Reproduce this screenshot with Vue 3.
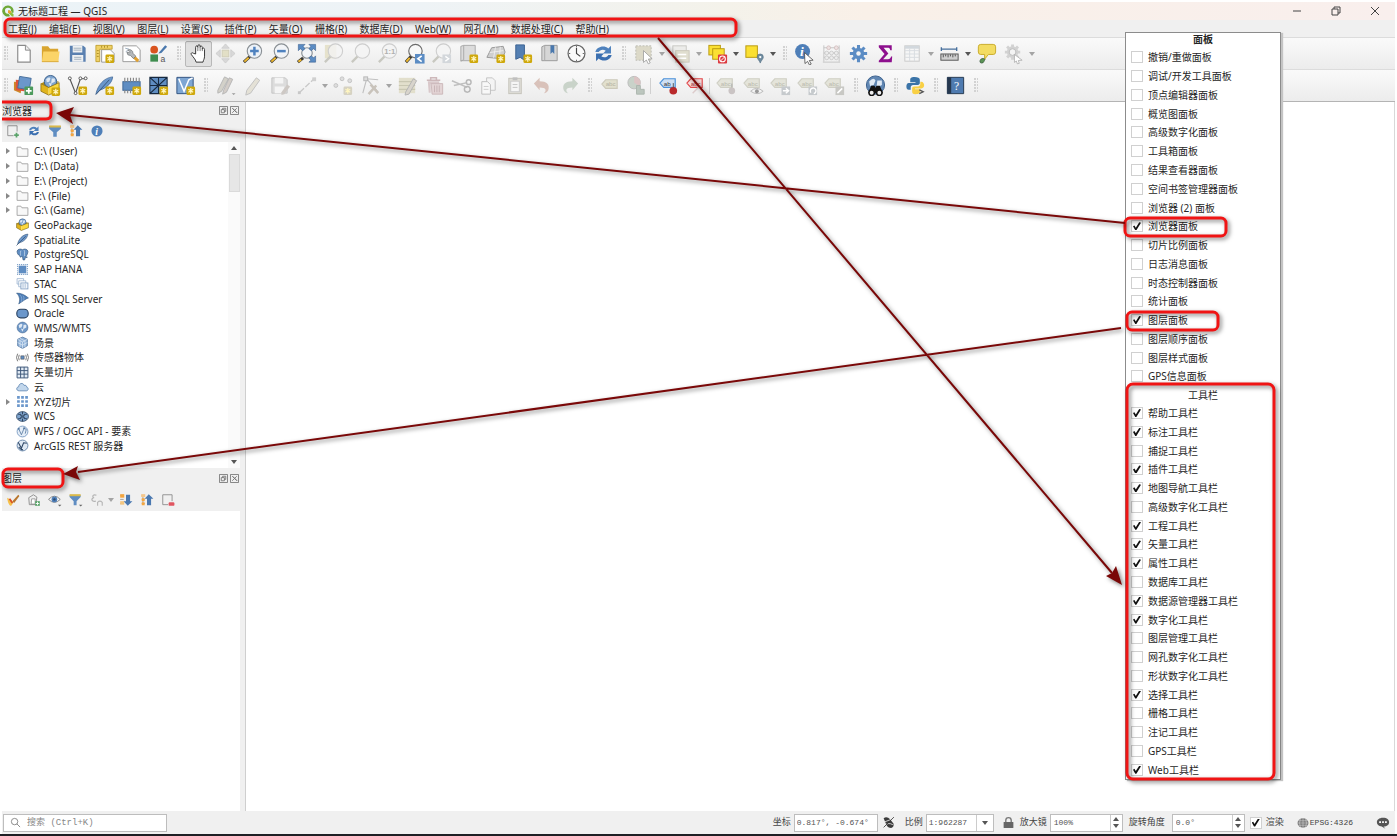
<script setup>
import { ref } from 'vue'

const menus = [
  ['工程', 'J'], ['编辑', 'E'], ['视图', 'V'], ['图层', 'L'], ['设置', 'S'], ['插件', 'P'],
  ['矢量', 'O'], ['栅格', 'R'], ['数据库', 'D'], ['Web', 'W'], ['网孔', 'M'], ['数据处理', 'C'], ['帮助', 'H'],
]

const BLUE = '#5b8cc4'
const NAVY = '#3a5f8c'
const star = (x = 14, y = 14, c = '#cfa80c') =>
  `<rect x="${x}" y="${y}" width="9" height="9" rx="1.5" fill="${c}"/><path d="M${x + 4.5} ${y + 1.5}v6M${x + 2} ${y + 3}l5 3M${x + 7} ${y + 3}l-5 3" stroke="#fff6c0" stroke-width="1.3"/>`
const lens = (cx, cy, fill, r = 7.5, stroke = '#8a9095') =>
  `<path d="M${cx - 4} ${cy + 5}L3 21" stroke="#3c3a34" stroke-width="3.2"/><path d="M${cx - 6} ${cy + 7}L3.5 20.5" stroke="#f0b92e" stroke-width="2"/><circle cx="${cx}" cy="${cy}" r="${r}" fill="${fill}" stroke="${stroke}" stroke-width="1.2"/>`
const dimLens = (inner = '', back = '') =>
  `${back}<path d="M9 15l-6 6" stroke="#c8c8c0" stroke-width="2.4"/><circle cx="14" cy="9.5" r="7.5" fill="#f4f4f4" fill-opacity=".8" stroke="#cecece" stroke-width="1.2"/>${inner}`
const tag = (x, y, fill, stroke, text, tc = '#555') =>
  `<path d="M${x} ${y + 4.5}l4-4.5h12v9h-12z" fill="${fill}" stroke="${stroke}" stroke-width="1.2"/><text x="${x + 4}" y="${y + 7}" font-size="6.5" font-family="Liberation Sans, sans-serif" fill="${tc}">${text}</text>`
const dimTag = (extra) => `${tag(1, 5, '#e4e4da', '#cfcfc4', 'abc', '#b8b8ac')}${extra}`
const globe = (cx, cy, r, sea = '#7fa5cf', land = '#dfe9f4') =>
  `<circle cx="${cx}" cy="${cy}" r="${r}" fill="${sea}" stroke="${NAVY}" stroke-width="1"/><path d="M${cx - r * 0.7} ${cy - r * 0.4}q${r * 0.5} ${-r * 0.5} ${r * 0.7} ${-r * 0.1}l${-r * 0.2} ${r * 0.5}l${-r * 0.4} ${r * 0.1}zM${cx + r * 0.2} ${cy - r * 0.5}l${r * 0.5} 0l0 ${r * 0.5}l${-r * 0.6} ${r * 0.3}zM${cx - r * 0.3} ${cy + r * 0.2}l${r * 0.5} ${r * 0.1}l${-r * 0.2} ${r * 0.5}z" fill="${land}"/>`
const refresh = (a, b) =>
  `<path d="M3.5 10.5c1-5.500 9-8 13.500-3.800l2.800-2.700v8h-8.300l2.800-2.800c-2.600-2.200-6.300-1-7.300 1.300z" fill="${a}"/><path d="M20.500 13.500c-1 5.500-9 8-13.500 3.800l-2.800 2.700v-8h8.300l-2.800 2.800c2.600 2.200 6.300 1 7.300-1.300z" fill="${b}"/>`

const glyphs = {
  new: '<path d="M6 3.500h8l5 5v12.500H6z" fill="#fff" stroke="#8a8a8a" stroke-width="1.200"/><path d="M14 3.500v5h5" fill="#eee" stroke="#8a8a8a"/>',
  open: '<path d="M3 20V4.500h6.500l2 2.500H20v13z" fill="#d9a530"/><path d="M4.500 10l17 0-1.500 10.500H3z" fill="#fbd468"/><path d="M3 20.500h17.500" stroke="#d9a93a"/>',
  save: '<path d="M4 4h14l2.500 2v14.500H4z" fill="#5a80b0"/><path d="M7 4h10v7H7zM6.500 13.500h11.500v7H6.500z" fill="#eef0f2"/><path d="M8 6.500h8M8 8.500h8M8.500 16h7.500M8.500 18h7.500" stroke="#8fa0b0" stroke-width=".8"/>',
  layout: `<path d="M9 8h9l4 4v9H9z" fill="#fff" stroke="#999"/><path d="M3 3.500h17v4H7v13H3z" fill="#f0d268" stroke="#b99520" stroke-width=".8"/><path d="M9 4v2M12 4v2M15 4v2M4 9h2M4 12h2M4 15h2" stroke="#9c7c18" stroke-width=".8"/>${star(13, 13)}`,
  layouts: '<path d="M3 4h14l4 4v12.500H3z" fill="#fff" stroke="#999"/><path d="M5.500 6.500l4 1M6 10l2-1" stroke="#9ab"/><path d="M13 14l6 6" stroke="#e0a030" stroke-width="3.200"/><path d="M8 8.500a3.600 3.600 0 0 1 5.500 3.300l3 3-2.500 2.500-3-3.200a3.600 3.600 0 0 1-3.800-3.600l2.600.8 1-1z" fill="#b4b8bb" stroke="#6c7074" stroke-width=".7"/>',
  styles: '<circle cx="7.500" cy="8" r="4" fill="#d9541f"/><rect x="3.500" y="13" width="8" height="7.500" fill="#3f8d4f"/><path d="M13 10.500l6-7 2 1.500-6 6.500-3 .5z" fill="#4a78ad"/><text x="14" y="20.500" font-size="9" font-family="Liberation Sans, sans-serif" fill="#555">a</text>',
  hand: '<path d="M9 12.500V5.500c0-2 2.300-2 2.300 0V4.300c0-2 2.400-2 2.400 0V5.500c0-1.800 2.300-1.600 2.300.2V7.500c0-1.700 2.300-1.600 2.300.3v7c0 3-1.300 4-1.600 6.200H9.500C9 18 6 15.500 4.500 13c-.8-1.500 1-2.400 2.200-1.200z" fill="#fff" stroke="#333" stroke-width="1"/><path d="M11.300 5.500v4M13.700 5.500v4M16 6.500v3" stroke="#555" stroke-width=".8"/>',
  panSel: '<g fill="#d8d8d8" stroke="#cacaca" stroke-width=".8"><path d="M12 2l4 4.500H8zM12 22l4-4.500H8zM2 12l4.500-4v8zM22 12l-4.500-4v8z"/></g><rect x="8.500" y="8.500" width="7" height="7" fill="#e2dfc6" stroke="#cfccb6"/>',
  zoomIn: lens(14, 9.5, '#edf2f8') + '<path d="M9.500 9.500h9M14 5v9" stroke="#4f82bf" stroke-width="2.600"/>',
  zoomOut: lens(14, 9.5, '#f2f4f7') + '<path d="M9.500 9.500h9" stroke="#4f82bf" stroke-width="2.600"/>',
  zoomFull: lens(12.5, 11.5, '#f2f5f9', 5.5) + `<g fill="${BLUE}" stroke="${NAVY}" stroke-width=".6"><path d="M3.500 2.500h7l-2 2 2 2.500-2.500 2-2.500-2-2 2zM21.500 2.500h-7l2 2-2 2.500 2.500 2 2.500-2 2 2zM21.500 21h-7l2-2-2-2.500 2.500-2 2.500 2 2-2z"/></g>`,
  zoomSel: dimLens('', '<rect x="3" y="3" width="12" height="14" fill="#e6e2cc"/>'),
  zoomLayer: dimLens(),
  zoomNative: dimLens('<text x="8.500" y="12.500" font-size="8" font-weight="bold" font-family="Liberation Sans, sans-serif" fill="#b0b0b0">1:1</text>'),
  zoomLast: `${lens(13, 9.5, '#f8f8f8', 7, '#6c6c6c')}<rect x="12.500" y="12.500" width="10" height="10" fill="${BLUE}"/><path d="M19.500 14.500l-4 3 4 3" stroke="#fff" stroke-width="1.700" fill="none"/>`,
  zoomNext: dimLens('<rect x="13" y="13" width="9" height="9" fill="#d3d7db"/><path d="M16 15l3.500 2.500-3.500 2.500" stroke="#fff" stroke-width="1.400" fill="none"/>'),
  mapNew: `<path d="M4 4.500l3-1v15l-3 1.500zM7 3.500h12v16H4" fill="#dcdcdc" stroke="#a8a8a8"/>${star(13, 13)}`,
  map3d: `<path d="M3 16l5-10 12-1.500 2 6-3 7z" fill="#cfcfcf" stroke="#999"/><path d="M6 11l14-2M12 5.500l-2 11M17 5l-1 12" stroke="#f5f5f5" stroke-width=".8"/>${star(13, 13)}`,
  bookmarkNew: `<path d="M5 3h9v16l-4.500-3L5 18z" fill="#5580b3" stroke="#3a6090"/>${star(13, 13)}`,
  bookmarks: '<path d="M4 5l3-1.500h13v16H4z" fill="#d6d6d6" stroke="#9a9a9a"/><path d="M7 3.500v16" stroke="#aaa"/><path d="M13 3.500h4v9l-2-2-2 2z" fill="#4a78ad"/>',
  clock: '<circle cx="12" cy="12" r="8.800" fill="#fafafa" stroke="#666" stroke-width="1.300"/><path d="M12 6v6l4 3" stroke="#444" stroke-width="1.200" fill="none"/><path d="M12 4v1.500M12 18.500V20M4 12h1.500M18.500 12H20" stroke="#666"/>',
  refresh: refresh('#4f82bd', '#3b6fb0'),
  selRect: '<rect x="4" y="4" width="16" height="15" fill="#dcd9c8" stroke="#bcbcb4" stroke-dasharray="2 1.500"/><path d="M12 9l9 8.500-4 .3 2 4-2 1-2-4-3 2.500z" fill="#fff" stroke="#999" stroke-width=".8"/>',
  selVal: '<rect x="4" y="4" width="14" height="12" fill="#ececea" stroke="#c8c8c4"/><rect x="7" y="9" width="14" height="12" fill="#e0decf" stroke="#ccc9bc"/><path d="M9 13h9M9 17h9" stroke="#fff" stroke-width="1.500"/>',
  deselect: '<rect x="3" y="3.500" width="12" height="10" fill="#fbe032" stroke="#b99a10"/><rect x="7" y="7" width="12" height="11" fill="#fbe032" stroke="#b99a10"/><rect x="12.500" y="13" width="9.500" height="9.500" rx="1" fill="#dd3a40"/><circle cx="17.200" cy="17.700" r="3" fill="none" stroke="#fff" stroke-width="1.100"/><path d="M15 20l4.500-4.500" stroke="#fff"/>',
  selLoc: '<rect x="3" y="4" width="12" height="12" fill="#fbe032" stroke="#b99a10"/><path d="M18 22c-1-3-3.200-4-3.200-6.300a3.200 3.200 0 0 1 6.400 0c0 2.300-2.200 3.300-3.200 6.300z" fill="#6f8ca0" stroke="#4f6b80" stroke-width=".6"/><circle cx="18" cy="15.700" r="1.200" fill="#fff"/>',
  identify: '<circle cx="10" cy="10" r="7.800" fill="#4f7fb8"/><text x="7.300" y="15" font-size="14" font-style="italic" font-weight="bold" font-family="Liberation Serif, serif" fill="#fff">i</text><path d="M12 11l9 8-4 .3 2 3.700-1.800 1-2-3.800-2.700 2.300z" fill="#fff" stroke="#444" stroke-width=".8"/>',
  abacus: '<path d="M4 3.500v17M20 3.500v17M3 21h18M4 6h16M4 11.500h16M4 16h16" stroke="#c4c4c4" fill="none"/><g fill="#eee2e2" stroke="#ccb6b6" stroke-width=".7"><circle cx="9" cy="6" r="2"/><circle cx="17" cy="6" r="2"/></g><g fill="#ececec" stroke="#c0c0c0" stroke-width=".7"><circle cx="7" cy="11.500" r="2"/><circle cx="12" cy="11.500" r="2"/><circle cx="17" cy="11.500" r="2"/><circle cx="7" cy="16.500" r="2"/><circle cx="12" cy="16.500" r="2"/><circle cx="17" cy="16.500" r="2"/></g>',
  gear: '<g stroke="#5b8cc4" stroke-width="3.200"><path d="M12 3v18M3 12h18M5.700 5.700l12.600 12.600M18.300 5.700L5.700 18.300"/></g><circle cx="12" cy="12" r="6" fill="#5b8cc4"/><circle cx="12" cy="12" r="2.300" fill="#f4f4f4"/>',
  sigma: '<path d="M5 3.500h13.500v5h-1.500c-.5-2-1-2.500-3-2.500h-4l5 6-5.500 6h5c2 0 2.700-.8 3.300-2.800h1.200l-.5 5.800H5v-1.500l6-7-6-7z" fill="#8d0f8d"/>',
  table: '<rect x="4" y="4" width="15" height="16" fill="#f6f6f6" stroke="#cacaca"/><path d="M4 9h15M4 12.500h15M4 16h15M9 7v13M14 7v13" stroke="#d8dde1"/><rect x="4" y="4" width="15" height="3" fill="#d2d8dd"/>',
  measure: '<path d="M3 7.500h17M3.500 5.500v4M19.500 5.500v4" stroke="#476f9c" stroke-width="1.400"/><rect x="3" y="12.500" width="18" height="6.500" fill="#cfcfcf" stroke="#555"/><path d="M5.500 13v3M8 13v2M10.500 13v3M13 13v2M15.500 13v3M18 13v2" stroke="#444" stroke-width=".9"/>',
  tip: '<path d="M6 2.500h13q2.500 0 2.500 2.500v5.500q0 2.500-2.500 2.500h-5l-4 5v-5H6q-2.500 0-2.500-2.500V5q0-2.500 2.500-2.500z" fill="#f3dc62" stroke="#c9ab2a"/><path d="M7 22c-2 0-2.500-2-1-4 1.500-1.300 4-1 4.500.5-1 .5-1 3.500-3.500 3.500z" fill="#5b9455" stroke="#2f4f35" stroke-width=".7"/>',
  gearDim: '<g stroke="#d2d2d2" stroke-width="3"><path d="M11 2.500v16M3 10.500h16M5.300 4.800l11.400 11.400M16.700 4.800L5.300 16.200"/></g><circle cx="11" cy="10.500" r="6" fill="#d2d2d2"/><circle cx="11" cy="10.500" r="3.500" fill="#f4f4f4" stroke="#bbb"/><path d="M13 13l8 6-4 .3 1 3-2 .5-1-3-2 1.500z" fill="#fff" stroke="#aaa" stroke-width=".8"/>',

  dsm: `<path d="M2 8l9 1-2 11-7-3z" fill="#cc8a28"/><path d="M4 6l10 1-1 11-9-1z" fill="#e0523a"/><path d="M8 2.500l12 2-2 12-12-2z" fill="#6b97cb" stroke="#476f9c"/><rect x="13" y="13" width="9" height="9" rx="1" fill="#4c9a5c"/><path d="M17.500 14.500v6M14.500 17.500h6" stroke="#fff" stroke-width="1.800"/>`,
  gpkg: `<path d="M2 10l8-4 11 2-11 6z" fill="#b58f14"/>${globe(12, 8, 6.5)}<path d="M2 10l8 4v8l-8-4z" fill="#e0b41e"/><path d="M10 14l11-5v8l-11 5z" fill="#fbd83c"/><path d="M2 10l8 4 11-5v8l-11 5-8-4z" fill="none" stroke="#8a6d10" stroke-width=".8"/>${star(13, 14)}`,
  shape: `<path d="M4 5l6 15L15 5h6" fill="none" stroke="#555" stroke-width="1.200"/><g fill="#fff" stroke="#555"><circle cx="4" cy="4.500" r="1.500"/><circle cx="10" cy="20" r="1.500"/><circle cx="15" cy="4.500" r="1.500"/><circle cx="20.500" cy="4.500" r="1.500"/></g>${star(13, 13)}`,
  feather: `<path d="M3 21C5 12 11 4 20.500 3 20 9 15 14 7 17z" fill="#6b97cb" stroke="#3f6796" stroke-width=".8"/><path d="M3 21.500L17 6" stroke="#39587d"/>${star(13, 13)}`,
  chip: `<rect x="3" y="8" width="18" height="9" fill="#5f8dc2" stroke="#3f6796"/><path d="M5 4v4M8 4v4M11 4v4M14 4v4M17 4v4M20 4v4M5 17v3M8 17v3M11 17v3" stroke="#888" stroke-width="1.200"/>${star(13, 13)}`,
  mesh: `<path d="M3 3.500h18v17H3z" fill="#5f8dc2"/><path d="M3 3.500h18v17H3zM12 3.500v17M3 12h18M3 3.500l9 8.500 9-8.500M3 20.500l9-8.500" fill="none" stroke="#16283e" stroke-width="1.100"/>${star(13, 13)}`,
  vlayer: `<path d="M3 3.500h17v17H3z" fill="#7ea6d3" stroke="#2f5280"/><path d="M5 5l5.500 13L15.500 6l4-2" fill="none" stroke="#fff" stroke-width="1.600"/>${star(13, 13)}`,
  pencils: '<path d="M4 17L11 3l4 2-7 13-4 2z" fill="#d3d1c9" stroke="#b6b6b6"/><path d="M10 17L16 4l3.500 1.500L13 19l-4 2z" fill="#d3cdc8" stroke="#b6b6b6"/><path d="M18.500 20h4l-2 2z" fill="#999"/>',
  pencil: '<path d="M6 17L16 4l3.500 2.500L10 20l-5 2z" fill="#e4e1d6" stroke="#c0c0c0"/>',
  saveEd: '<path d="M4 4h14l2 2v14H4z" fill="#dcdcdc" stroke="#c4c4c4"/><path d="M7 4h9v6H7zM7 13h10v7H7z" fill="#f4f4f4"/><path d="M14 19l6-8 3 2-6 8-3 1z" fill="#cdc8c4"/>',
  line: '<path d="M5 19L20 5" stroke="#c8c8c8" stroke-width="1.300" stroke-dasharray="6 2"/><rect x="3" y="18" width="3" height="3" fill="#c8c8c8"/><rect x="18" y="3.500" width="4" height="4" fill="#d0d0d0"/>',
  points: '<g fill="#dedede" stroke="#c2c2c2"><circle cx="4" cy="12" r="2"/><circle cx="10.500" cy="5" r="2"/><circle cx="18.500" cy="7" r="2"/></g>' + star(12, 13, '#d6d2c2'),
  vertex: '<path d="M4 20L8 5l12 1M8 5l12 14" fill="none" stroke="#c0c0c0" stroke-width="1.200"/><rect x="5" y="3" width="4" height="4" fill="#ddd" stroke="#b8b8b8"/><path d="M10 21l8-9M12 11l8 9" stroke="#c9c3bb" stroke-width="2.600"/>',
  multiEdit: '<rect x="3" y="4" width="17" height="16" fill="#e2dfcc"/><path d="M3 8h17M3 12h17M3 16h17" stroke="#c9c7b2" stroke-width="1.200"/><path d="M10 19l8-14 3.500 2-8 14-4 1z" fill="#d8d4cc" stroke="#b4b4b4"/>',
  trash: '<path d="M4 6.500h14M8 6.500V4h6v2.500" stroke="#cdb8ba" stroke-width="1.600" fill="none"/><path d="M5 7.500h12v3H8v9H6z" fill="#d9c8ca"/><path d="M8.500 10h12v11h-11z" fill="#e3d4d5" stroke="#ccb8ba"/><path d="M12 12v7M14.500 12v7M17 12v7" stroke="#c8b4b6"/>',
  cut: '<path d="M2 7l16 7M4 12l14-3" stroke="#c0c0c0" stroke-width="1.600"/><circle cx="18" cy="16" r="3" fill="none" stroke="#b8b8b8" stroke-width="1.500"/><circle cx="19.500" cy="8.500" r="2.500" fill="none" stroke="#b8b8b8" stroke-width="1.500"/>',
  copy: '<path d="M10 4h6l3 3v10h-9z" fill="#f4f4f4" stroke="#c4c4c4"/><path d="M5 8h6l3 3v10H5z" fill="#f8f8f8" stroke="#bebebe"/><path d="M7 13h5M7 16h5" stroke="#ccc"/>',
  paste: '<rect x="5" y="4.500" width="13" height="16" fill="#e0dfd8" stroke="#c4c2ba"/><rect x="7" y="7.500" width="9" height="11" fill="#f6f6f6" stroke="#ccc"/><path d="M9 3.500h5v3H9z" fill="#c0c0c0"/><path d="M9 11h5M9 14h5" stroke="#c4c4c4"/>',
  undo: '<path d="M3 10l6-6v3.500c7 0 11 3 9 9.500-1 2-3 3-4.500 3 3-3 2.500-6-4.500-6V17z" fill="#d9c2ba"/>',
  redo: '<path d="M21 10l-6-6v3.500c-7 0-11 3-9 9.500 1 2 3 3 4.500 3-3-3-2.500-6 4.500-6V17z" fill="#c9d3c9"/>',
  label: tag(4, 6, '#e2e0ce', '#ccc9ba', 'abc', '#b3b1a2'),
  diagram: '<circle cx="9.500" cy="9" r="6.500" fill="#c9d2c9" stroke="#bcbcbc"/><path d="M9.500 9V2.500a6.500 6.500 0 0 1 5.600 10z" fill="#dcc4c4"/><path d="M12 20v-8h4v4h4v5h-8z" fill="#bcc6be" stroke="#acb6ae"/>',
  pin: tag(3, 5, '#cfe0f3', '#4a90d9', 'ab', '#333') + '<circle cx="17" cy="17.500" r="4" fill="#b9292b"/><path d="M17 14V9.500" stroke="#555"/>',
  pinHide: tag(3, 5, '#f8dede', '#e2474a', 'abc', '#a33') + '<path d="M9 20l8-8" stroke="#dcc" stroke-width="1.500"/>',
  t1: dimTag('<circle cx="16.500" cy="17.500" r="3.500" fill="#cac4c4"/><path d="M16.500 14V10" stroke="#aaa"/>'),
  t2: dimTag('<path d="M8 18q6-6 13 0q-6 5-13 0z" fill="#f4f4f4" stroke="#b8b8b8"/><circle cx="14.500" cy="18" r="2" fill="#999"/>'),
  t3: dimTag('<rect x="12" y="13" width="9" height="9" fill="#c6cacd"/><path d="M13.500 17.500h5M16.500 15l3 2.500-3 2.500" stroke="#fff" stroke-width="1.400" fill="none"/>'),
  t4: dimTag('<rect x="12" y="13" width="9" height="9" fill="#c6cacd"/><path d="M14.500 19.500a3 3 0 1 1 3 1" stroke="#fff" stroke-width="1.400" fill="none"/>'),
  t5: dimTag('<rect x="12" y="13" width="9" height="9" fill="#c8c8c4"/><path d="M14 20l5-5" stroke="#fff" stroke-width="1.600"/>'),
  meta: `${globe(12, 11.5, 9.5, '#6187b3')}<path d="M5 20l3-7h2.500l1 2h1l1-2H16l3 7" fill="#111" stroke="#111" stroke-width="1.500"/><circle cx="8" cy="19.500" r="2.800" fill="#eee" stroke="#111" stroke-width="1.500"/><circle cx="16" cy="19.500" r="2.800" fill="#eee" stroke="#111" stroke-width="1.500"/>`,
  python: '<path d="M11 3c-4 0-4.500 1.500-4.500 3v2.500H12v1H5C3 9.500 2.500 11.500 2.500 13s.5 3.500 2.500 3.500h2V14c0-1.500 1-2.500 2.500-2.500h5c1.200 0 2-1 2-2V6c0-2-2-3-5.500-3z" fill="#3b74a8"/><path d="M12 21c4 0 5-1.500 5-3v-2h-5.500v-1H18c2.500 0 3-2 3-3.500S20 8 18 8h-1v2.500c0 1.500-1 2.500-2.500 2.500h-4c-1.200 0-2 1-2 2V18c0 2 .5 3 3.500 3z" fill="#f9d044"/><path d="M16 16.500l4 2-4 2" stroke="#555" stroke-width="1.400" fill="none"/>',
  help: '<path d="M3.500 3.500h17v17h-17z" fill="#4f7bb0" stroke="#26384f"/><path d="M3.500 3.500h4v17h-4z" fill="#26384f"/><text x="10.500" y="16.500" font-size="12" font-family="Liberation Serif, serif" fill="#fff">?</text>',

  addLayer: '<path d="M19 13V3H3v17h10" fill="none" stroke="#8a8a8a" stroke-width="1.500"/><path d="M18 15v8M14 19h8" stroke="#5aa36a" stroke-width="3"/>',
  funnel: '<path d="M2 4h20v4l-7 6v8h-6v-8L2 8z" fill="#5f8dc2"/><path d="M2 2.500h20v3.500H2z" fill="#d9b94a"/>',
  collapse: '<path d="M3 4h5M3 11h5M3 18h5M5 4v14" stroke="#999" stroke-width="1.500"/><rect x="2" y="2" width="7" height="5" fill="#f6c78a"/><rect x="3" y="9" width="5" height="5" fill="#f4a640"/><rect x="3" y="16" width="5" height="5" fill="#f4a640"/><path d="M15 2l8 8h-4v11h-7V10H8z" fill="#4a78b0"/>',
  expand: '<path d="M2 4h6M2 11h6M2 18h6" stroke="#999" stroke-width="1.500"/><rect x="2" y="2" width="7" height="6" fill="#f4a640"/><rect x="2" y="14" width="7" height="6" fill="#f4c680"/><path d="M15 22l8-8h-4V3h-7v11H8z" fill="#4a78b0"/>',
  info: '<circle cx="12" cy="12" r="9.500" fill="#4f7fb8"/><text x="9" y="18" font-size="17" font-style="italic" font-weight="bold" font-family="Liberation Serif, serif" fill="#fff">i</text>',
  brush: '<path d="M2 8l7 4 4 4-4 6c-3 0-6-5-7-14z" fill="#f5c04a"/><path d="M6 10l5 7" stroke="#d94f2a" stroke-width="3"/><path d="M11 14L21 3l2 2-9 12z" fill="#b8762e"/>',
  group: '<path d="M3 8l8-5 6 4-2 13H4z" fill="#eee" stroke="#888" stroke-width="1.500"/><path d="M8 10h6v9H7z" fill="#fff" stroke="#888" stroke-width="1.300"/><rect x="14" y="14" width="8" height="8" fill="#5aa36a"/><path d="M18 15v6M15 18h6" stroke="#fff" stroke-width="1.500"/>',
  eye: '<path d="M1 11q10-11 20 0q-10 10-20 0z" fill="#fff" stroke="#777" stroke-width="1.500"/><circle cx="11" cy="11" r="5" fill="#4f7fb8"/><circle cx="11" cy="11" r="2" fill="#2b4a70"/><path d="M17 20h6l-3 3z" fill="#666"/>',
  funnel2: '<path d="M1 4h19v3l-7 7v7H8v-7L1 7z" fill="#5f8dc2"/><path d="M1 2h19v3.500H1z" fill="#d9b94a"/><path d="M17 20h6l-3 3z" fill="#666"/>',
  epsilon: '<path d="M11 4c-5-2-8 1-5 4-5 2-3 8 4 6" fill="none" stroke="#b4b4b4" stroke-width="2"/><path d="M13 22v-6q4-4 8 0v6" fill="none" stroke="#b8b8b8" stroke-width="2"/>',
  removeLayer: '<path d="M19 14V3H3v17h9" fill="none" stroke="#8a8a8a" stroke-width="1.500"/><rect x="13" y="16" width="10" height="6" rx="2" fill="#e05560"/>',

  folder: '<path d="M2 21V4h7l2 3h11v14z" fill="#f8f8f8" stroke="#9a9a9a" stroke-width="1.500"/>',
  bGpkg: `<path d="M1 10l10-5 12 4-13 5z" fill="#b58f14"/>${globe(12, 8, 6.5)}<path d="M1 10l9 4v9l-9-5z" fill="#e0b41e"/><path d="M10 14l13-5v9l-13 5z" fill="#fbd83c"/><path d="M1 10l9 4 13-5v9l-13 5-9-5z" fill="none" stroke="#6d5710" stroke-width="1"/>`,
  bFeather: '<path d="M3 20C5 11 12 3 22 2 21 9 16 15 7 18z" fill="#6b97cb" stroke="#3f5876"/><path d="M1 23L18 6" stroke="#39587d" stroke-width="1.500"/>',
  pg: '<path d="M2 6c1-4 6-5 10-3 4-2 9-1 10 3 0 4-2 8-4 10l3 1-4 1-1 4h-3l-1-6-2 0-2 1-2-4c-2 1-4-4-4-7z" fill="#5f8dc2" stroke="#33557c" stroke-width="1.200"/><path d="M9 5c-2 4 0 7-1 9M15 4c2 4 0 6 1 11" stroke="#dce8f4" stroke-width="1.200" fill="none"/>',
  hana: '<rect x="5" y="5" width="14" height="14" fill="#5f8dc2"/><path d="M3 2v20M21 2v20M2 3h20M2 21h20" stroke="#7c9fc6" stroke-width="2" stroke-dasharray="2 1.500" fill="none"/>',
  stac: '<path d="M2 3h12v4M2 3v10h4M5 7h13v4M5 7v11h4" fill="none" stroke="#9bb4d0" stroke-width="1.500"/><rect x="9" y="11" width="13" height="11" fill="#f2f6fb" stroke="#7d9cc0" stroke-width="1.500"/><path d="M13 13v7M17 13v7" stroke="#7d9cc0"/>',
  mssql: '<path d="M1 2c8 0 15 3 22 9-4 1-9 5-18 11 3-7 2-14-4-20z" fill="#4f7fb8" stroke="#33557c"/><path d="M8 6c3 3 3 8 2 12M13 7c2 2 2 5 1 9" stroke="#a9c3e2" fill="none"/>',
  oracle: '<rect x="1.500" y="4" width="21" height="16" rx="7" fill="#6b97cb" stroke="#28405e" stroke-width="2"/>',
  wms: globe(12, 12, 10, '#6f98c8'),
  scene: '<path d="M12 2l9 4v12l-9 5-9-5V6z" fill="#8db0d8" stroke="#4a6f9b" stroke-width="1.300"/><path d="M3 6l9 5 9-5M12 11v12M7 4l9 5M3 12l9 5 9-5M7.500 8.500v12M16.500 8.500v12" fill="none" stroke="#e6eff8" stroke-width="1.200"/>',
  sensor: '<rect x="9" y="9" width="6" height="6" fill="#5f8dc2" stroke="#444"/><path d="M6 7q-2.500 5 0 10M18 7q2.500 5 0 10M3 5q-4 7 0 14M21 5q4 7 0 14" fill="none" stroke="#666" stroke-width="1.600"/>',
  vtile: '<rect x="2" y="2" width="20" height="20" fill="#e3ecf6"/><path d="M2 2h20v20H2zM2 8.500h20M2 15h20M8.500 2v20M15 2v20" fill="none" stroke="#3f587a" stroke-width="1.800"/>',
  cloud: '<path d="M6 20c-6 0-6-7-1-7.500C5 6 13 4 15 10c3-1 5 1 4.500 3 4 .5 4 7-.5 7z" fill="#c2d7ec" stroke="#5b83b0" stroke-width="1.500"/>',
  xyz: '<g fill="#6b97cb"><path d="M2 2h5v5H2zM9.500 2h5v5h-5zM17 2h5v5h-5zM2 9.500h5v5H2zM9.500 9.500h5v5h-5zM17 9.500h5v5h-5zM2 17h5v5H2zM9.500 17h5v5h-5zM17 17h5v5h-5z"/></g>',
  wcs: '<ellipse cx="12" cy="12" rx="11" ry="9" fill="#7fa5cf" stroke="#28405e" stroke-width="1.500"/><path d="M4 8h5v3h6V8h5M4 16h5v-3h6v3h5M12 3v5M12 16v5" stroke="#1d3048" stroke-width="1.500" fill="none"/>',
  wfs: '<circle cx="12" cy="12" r="10" fill="#e4edf7" stroke="#6f93bc" stroke-width="1.500"/><path d="M5 7l5 11L15 6l4 2-2 8" fill="none" stroke="#55779f" stroke-width="1.500"/><circle cx="5" cy="7" r="1.800" fill="#55779f"/><circle cx="15" cy="6" r="1.800" fill="#55779f"/>',
  arcgis: '<circle cx="12" cy="12" r="10" fill="#dfe9f4" stroke="#55779f" stroke-width="1.500"/><path d="M4 6l6 11 4-10 6 1M5 15q4 5 8 5" fill="none" stroke="#2c4564" stroke-width="2"/>',

  logo: '<path d="M12 1a11 11 0 1 0 4 21l-3-4.500a6 6 0 1 1 5-5.500l4 5A11 11 0 0 0 12 1z" fill="#6fa938"/><path d="M12 11h4l7 8v4h-3l-8-8z" fill="#8fbf3a"/><path d="M12 11h4l3 3-4 3-3-2z" fill="#f0a030"/>',
  search: '<circle cx="10" cy="10" r="7" fill="none" stroke="#777" stroke-width="1.800"/><path d="M15 15l7 7" stroke="#777" stroke-width="1.800"/>',
  mouse: '<path d="M3 4q6-4 12 2l6 8q2 6-4 8-6 0-9-6z" fill="#3a3a3a"/><path d="M2 12L20 5M5 18q6-7 15-2" stroke="#eee" stroke-width="1.500" fill="none"/><path d="M3 21L22 2" stroke="#333" stroke-width="1.500"/>',
  lock: '<path d="M7 11V8q0-5 5-5t5 5v3" fill="none" stroke="#777" stroke-width="2.500"/><rect x="3" y="11" width="18" height="11" rx="1" fill="#666"/>',
  crs: '<ellipse cx="12" cy="12" rx="11" ry="9.500" fill="#777"/><path d="M1 12h22M3 7.500h18M3 16.500h18M12 2v20M7 3q-4 9 0 18M17 3q4 9 0 18" stroke="#ddd" fill="none"/>',
  bubble: '<path d="M12 3c7 0 10.500 3.500 10.500 7.500S19 18 13 18l3 4-6-4C4 17.500 1.500 14 1.500 10.500S5 3 12 3z" fill="#555"/><path d="M5.500 9h3v3h-3zM10.500 9h3v3h-3zM15.500 9h3v3h-3z" fill="#fff"/>',
}

const row1 = [
  '|', 'new', 'open', 'save', 'layout', 'layouts', 'styles',
  '|', 'hand', 'panSel', 'zoomIn', 'zoomOut', 'zoomFull', 'zoomSel', 'zoomLayer', 'zoomNative', 'zoomLast', 'zoomNext',
  'mapNew', 'map3d', 'bookmarkNew', 'bookmarks', 'clock', 'refresh',
  '|', 'selRect', 'v-', 'selVal', 'v-', 'deselect', 'v', 'selLoc', 'v',
  '|', 'identify', 'abacus', 'gear', 'sigma', 'table', 'v-', 'measure', 'v', 'tip', 'gearDim', 'v-',
]
const row2 = [
  '|', 'dsm', 'gpkg', 'shape', 'feather', 'chip', 'mesh', 'vlayer',
  '|', 'pencils', 'pencil', 'saveEd', 'line', 'v-', 'points', 'vertex', 'v-', 'multiEdit', 'trash', 'cut', 'copy', 'paste', 'undo', 'redo',
  '|', 'label', 'diagram', '/', 'pin', 'pinHide', '/', 't1', 't2', 't3', 't4', 't5',
  '|', 'meta', '|', 'python', '|', 'help', '|',
]

const browserTools = ['addLayer', 'refresh', 'funnel', 'collapse', 'info']
const layerTools = ['brush', 'group', 'eye', 'funnel2', 'epsilon', 'v-', 'expand', 'collapse', 'removeLayer']

const tree = [
  ['folder', 'C:\\ (User)', true], ['folder', 'D:\\ (Data)', true], ['folder', 'E:\\ (Project)', true],
  ['folder', 'F:\\ (File)', true], ['folder', 'G:\\ (Game)', true],
  ['bGpkg', 'GeoPackage'], ['bFeather', 'SpatiaLite'], ['pg', 'PostgreSQL'], ['hana', 'SAP HANA'], ['stac', 'STAC'],
  ['mssql', 'MS SQL Server'], ['oracle', 'Oracle'], ['wms', 'WMS/WMTS'], ['scene', '场景'], ['sensor', '传感器物体'],
  ['vtile', '矢量切片'], ['cloud', '云'], ['xyz', 'XYZ切片', true], ['wcs', 'WCS'],
  ['wfs', 'WFS / OGC API - 要素'], ['arcgis', 'ArcGIS REST 服务器'],
]

const item = (s) => ({ name: s.replace('*', ''), on: s.endsWith('*') })
const panels = ref([
  '撤销/重做面板', '调试/开发工具面板', '顶点编辑器面板', '概览图面板', '高级数字化面板', '工具箱面板',
  '结果查看器面板', '空间书签管理器面板', '浏览器 (2) 面板', '浏览器面板*', '切片比例面板', '日志消息面板',
  '时态控制器面板', '统计面板', '图层面板*', '图层顺序面板', '图层样式面板', 'GPS信息面板',
].map(item))
const toolbars = ref([
  '帮助工具栏*', '标注工具栏*', '捕捉工具栏', '插件工具栏*', '地图导航工具栏*', '高级数字化工具栏', '工程工具栏*',
  '矢量工具栏*', '属性工具栏*', '数据库工具栏', '数据源管理器工具栏*', '数字化工具栏*', '图层管理工具栏',
  '网孔数字化工具栏', '形状数字化工具栏', '选择工具栏*', '栅格工具栏', '注记工具栏', 'GPS工具栏', 'Web工具栏*',
].map(item))

const render = ref(true)
const coord = ref('0.817°, -0.674°')
const magnifier = ref('100%')
const rotation = ref('0.0°')
</script>

<template>
  <div class="window">
    <header class="titlebar">
      <svg class="logo" viewBox="0 0 24 24" v-html="glyphs.logo"></svg>
      <span class="title">无标题工程 — QGIS</span>
      <div class="winctl">
        <button aria-label="最小化"><svg viewBox="0 0 12 12"><path d="M2 6h8" /></svg></button>
        <button aria-label="还原"><svg viewBox="0 0 12 12"><path d="M2 4h6v6H2zM4 4V2h6v6H8" /></svg></button>
        <button aria-label="关闭"><svg viewBox="0 0 12 12"><path d="M2 2l8 8M10 2l-8 8" /></svg></button>
      </div>
    </header>

    <div class="menubar">
      <nav>
        <button v-for="m in menus" :key="m[0]">{{ m[0] }}(<u>{{ m[1] }}</u>)</button>
      </nav>
    </div>

    <div v-for="(row, r) in [row1, row2]" :key="r" class="toolbar">
      <template v-for="(t, i) in row" :key="i">
        <span v-if="t === '|'" class="handle"></span>
        <span v-else-if="t === '/'" class="sep"></span>
        <button v-else-if="t[0] === 'v' && t.length < 3" class="drop" :class="{ dim: t === 'v-' }" aria-label="更多"></button>
        <button v-else class="tool" :class="{ active: t === 'hand' }" :aria-label="t">
          <svg viewBox="0 0 24 24" fill="none" v-html="glyphs[t]"></svg>
        </button>
      </template>
    </div>

    <main class="body">
      <aside class="docks">
        <section class="dock browser">
          <div class="dock-title">
            <h2>浏览器</h2>
            <button aria-label="浮动"><svg viewBox="0 0 10 10"><path d="M.5.5h9v9h-9zM2.500 4h3.500v3.500H2.500zM4 4V2.500h3.500V6H6" /></svg></button>
            <button aria-label="关闭"><svg viewBox="0 0 10 10"><path d="M.5.5h9v9h-9zM2.500 2.500l5 5M7.500 2.500l-5 5M3 2.500l5 5" /></svg></button>
          </div>
          <div class="dock-tools">
            <button v-for="t in browserTools" :key="t" :aria-label="t"><svg viewBox="0 0 24 24" fill="none" v-html="glyphs[t]"></svg></button>
          </div>
          <div class="tree-box">
            <ul class="tree">
              <li v-for="n in tree" :key="n[1]">
                <span class="twist" :class="{ open: n[2] }"></span>
                <svg viewBox="0 0 24 24" fill="none" v-html="glyphs[n[0]]"></svg>
                <span>{{ n[1] }}</span>
              </li>
            </ul>
            <div class="scroll"><i class="up"></i><i class="thumb"></i><i class="down"></i></div>
          </div>
        </section>
        <section class="dock layers">
          <div class="dock-title">
            <h2>图层</h2>
            <button aria-label="浮动"><svg viewBox="0 0 10 10"><path d="M.5.5h9v9h-9zM2.500 4h3.500v3.500H2.500zM4 4V2.500h3.500V6H6" /></svg></button>
            <button aria-label="关闭"><svg viewBox="0 0 10 10"><path d="M.5.5h9v9h-9zM2.500 2.500l5 5M7.500 2.500l-5 5M3 2.500l5 5" /></svg></button>
          </div>
          <div class="dock-tools">
            <template v-for="t in layerTools" :key="t">
              <button v-if="t === 'v-'" class="drop dim" aria-label="更多"></button>
              <button v-else :aria-label="t"><svg viewBox="0 0 24 24" fill="none" v-html="glyphs[t]"></svg></button>
            </template>
          </div>
          <div class="layer-list"></div>
        </section>
      </aside>
      <div class="canvas"></div>
    </main>

    <footer class="status">
      <label class="locator">
        <svg viewBox="0 0 24 24" v-html="glyphs.search"></svg>
        <input type="text" placeholder="搜索 (Ctrl+K)" aria-label="搜索" />
      </label>
      <label class="field" for="coord">坐标</label>
      <input id="coord" v-model="coord" class="box coord" type="text" />
      <svg class="s-icon mouse" viewBox="0 0 24 24" fill="none" v-html="glyphs.mouse"></svg>
      <label class="field" for="scale">比例</label>
      <span class="combo box">
        <select id="scale"><option>1:962287</option></select>
        <i class="tri"></i>
      </span>
      <svg class="s-icon lock" viewBox="0 0 24 24" v-html="glyphs.lock"></svg>
      <label class="field" for="mag">放大镜</label>
      <span class="spin box">
        <input id="mag" v-model="magnifier" type="text" />
        <span class="steps"><button class="inc" aria-label="增加"></button><button class="dec" aria-label="减少"></button></span>
      </span>
      <label class="field rot" for="rot">旋转角度</label>
      <span class="spin box">
        <input id="rot" v-model="rotation" type="text" />
        <span class="steps"><button class="inc" aria-label="增加"></button><button class="dec" aria-label="减少"></button></span>
      </span>
      <label class="check render"><input v-model="render" type="checkbox" /><span>渲染</span></label>
      <button class="crs"><svg viewBox="0 0 24 24" v-html="glyphs.crs"></svg>EPSG:4326</button>
      <button class="msg" aria-label="消息"><svg viewBox="0 0 24 24" v-html="glyphs.bubble"></svg></button>
    </footer>

    <div class="popup">
      <h3>面板</h3>
      <ul class="list-a">
        <li v-for="p in panels" :key="p.name"><label class="check"><input v-model="p.on" type="checkbox" /><span>{{ p.name }}</span></label></li>
      </ul>
      <h3 class="second">工具栏</h3>
      <ul class="list-b">
        <li v-for="p in toolbars" :key="p.name"><label class="check"><input v-model="p.on" type="checkbox" /><span>{{ p.name }}</span></label></li>
      </ul>
    </div>

    <svg class="marks" width="1397" height="836" viewBox="0 0 1397 836" aria-hidden="true">
      <g class="boxes">
        <rect x="5" y="19" width="731" height="17" rx="5" />
        <path d="M2 102H46q5 0 5 5v7q0 5-5 5H2" />
        <rect x="3" y="469" width="60" height="18" rx="5" />
        <rect x="1125" y="218" width="101" height="18" rx="5" />
        <rect x="1127" y="312" width="91" height="18" rx="5" />
        <rect x="1127" y="384" width="147" height="395" rx="6" />
      </g>
      <g class="arrows">
        <path class="line" d="M1125 223L70 115M1121 328L78 472M658 38L1112 573" />
        <path class="head" d="M56 113l18-6-4 8 3 9zM63 474l15-8-2 6 4 8zM1122 585l-16-9 6-3 4-7z" />
      </g>
    </svg>
  </div>
</template>

<style>
html, body, #app { height: 100%; }
body { margin: 0; background: #fff; overflow: hidden; }
</style>

<style scoped>
.window {
  position: relative;
  box-sizing: border-box;
  height: 100%;
  padding: 2px 2px 0;
  border-bottom: 2px solid #1e1f24;
  display: flex;
  flex-direction: column;
  font: 10px/14px "Noto Sans", "Noto Sans CJK SC", sans-serif;
  color: #262626;
  background: #fff;
}
button {
  border: 0;
  padding: 0;
  margin: 0;
  background: none;
  font: inherit;
  color: inherit;
}
ul { list-style: none; margin: 0; padding: 0; }
h2, h3 { margin: 0; font-size: 10px; line-height: 14px; font-weight: 400; }

.titlebar {
  flex: 0 0 18px;
  display: flex;
  align-items: center;
  background: linear-gradient(90deg, #ebf3f7 0%, #eef3f6 30%, #f4f2ea 52%, #f9f0e8 62%, #f9efed 100%);
}
.logo { width: 12px; height: 12px; }
.title { margin-left: 4px; flex: 1; }
.winctl { display: flex; gap: 27px; padding-right: 14px; }
.winctl button { width: 12px; height: 12px; }
.winctl svg { display: block; fill: none; stroke: #444; stroke-width: 1; }

.menubar {
  flex: 0 0 17px;
  display: flex;
  align-items: center;
  padding-left: 6px;
  background: #f0f0f0;
  border-bottom: 1px solid #dcdcdc;
}
.menubar nav { width: 601px; display: flex; justify-content: space-between; }

.toolbar {
  flex: 0 0 32px;
  box-sizing: border-box;
  display: flex;
  align-items: center;
  background: linear-gradient(#fafafa, #ececec);
  border-bottom: 1px solid #dcdcdc;
}
.toolbar + .toolbar { border-bottom: 1px solid #b4b4b4; }
.handle {
  flex: none;
  width: 13px;
  height: 15px;
  background: radial-gradient(circle at 1px 1px, #d2d2d2 0 1px, transparent 1px) 5px 0 / 3px 3px;
  background-clip: content-box;
  box-sizing: border-box;
  padding: 0 4px 0 5px;
}
.handle:first-child { width: 8px; padding: 0 2px 0 2px; }
.sep { flex: none; width: 5px; height: 16px; box-sizing: border-box; border-left: 1px solid #d0d0d0; }
.tool {
  flex: none;
  width: 27px;
  height: 26px;
  box-sizing: border-box;
  display: flex;
  align-items: center;
  justify-content: center;
}
.tool svg { flex: none; width: 23px; height: 23px; }
.tool.active { border: 1px solid #b8b8b8; border-radius: 2px; background: #e0e0e0; }
.drop { flex: none; width: 10px; height: 20px; display: flex; align-items: center; justify-content: center; }
.drop::before { content: ""; border: 3px solid transparent; border-top: 4px solid #555; border-bottom: 0; }
.drop.dim::before { border-top-color: #a4a4a4; }

.body { flex: 1; min-height: 0; display: flex; }
.docks {
  flex: 0 0 243px;
  display: flex;
  flex-direction: column;
  background: #f0f0f0;
  border-right: 1px solid #cfcfcf;
}
.dock { display: flex; flex-direction: column; padding-right: 5px; }
.browser { flex: 0 0 366px; }
.layers { flex: 1; min-height: 0; }
.dock-title { flex: 0 0 17px; display: flex; align-items: center; gap: 2px; padding-right: 1px; }
.dock-title h2 { flex: 1; }
.dock-title button, .dock-title svg { display: block; width: 9px; height: 9px; }
.dock-title svg { fill: none; stroke: #777; stroke-width: 1; }
.dock-tools { flex: 0 0 23px; display: flex; align-items: center; }
.dock-tools button { width: 21px; height: 20px; display: flex; align-items: center; justify-content: center; }
.dock-tools svg { width: 14px; height: 14px; }
.dock-tools .drop { width: 8px; }
.tree-box { flex: 1; min-height: 0; display: flex; background: #fff; }
.tree { flex: 1; display: flex; flex-direction: column; padding: 2px 0 15px; }
.tree li { flex: 1; min-height: 0; display: flex; align-items: center; white-space: nowrap; }
.tree svg { flex: none; width: 13px; height: 13px; margin-right: 5px; }
.twist { flex: none; width: 14px; }
.twist.open::before { content: ""; display: block; width: 0; margin-left: 4px; border: 3px solid transparent; border-left: 4px solid #888; border-right: 0; }
.scroll { width: 12px; display: flex; flex-direction: column; align-items: center; background: #fafafa; }
.scroll .thumb { width: 11px; height: 38px; margin-top: 4px; background: #e6e6e6; border: 1px solid #dadada; box-sizing: border-box; }
.scroll .up { margin-top: 4px; border: 3px solid transparent; border-bottom: 4px solid #555; border-top: 0; }
.scroll .down { margin: auto 0 4px; border: 3px solid transparent; border-top: 4px solid #555; border-bottom: 0; }
.layers .dock-title { flex-basis: 20px; }
.layer-list { flex: 1; background: #fff; }
.canvas { flex: 1; background: #fff; border-right: 1px solid #d8d8d8; }

.status {
  flex: 0 0 23px;
  display: flex;
  align-items: center;
  padding: 0 5px 0 1px;
  background: #f0f0f0;
  font-family: "Liberation Mono", "Noto Sans CJK SC", monospace;
  font-size: 9px;
  line-height: 12px;
  color: #444;
}
.status input, .status select {
  min-width: 0;
  padding: 0;
  border: 0;
  outline: 0;
  background: transparent;
  font: 8px/12px "Liberation Mono", "Noto Sans CJK SC", monospace;
  color: #555;
}
.status svg { flex: none; }
.box, .locator { box-sizing: border-box; height: 18px; border: 1px solid #bdbdbd; background: #fff; }
.locator { width: 164px; display: flex; align-items: center; padding: 0 6px; gap: 6px; margin-right: auto; }
.locator svg { width: 11px; height: 11px; }
.locator input { flex: 1; font-size: 9px; }
.locator input::placeholder { color: #888; }
.field { margin-right: 3px; white-space: nowrap; }
.status .coord { width: 84px; padding: 0 2px; border: 1px solid #bdbdbd; background: #fff; }
.s-icon { width: 13px; height: 13px; }
.mouse { margin: 0 10px 0 4px; }
.combo { width: 68px; display: flex; align-items: center; position: relative; }
.combo select { appearance: none; width: 100%; height: 100%; padding-left: 2px; }
.tri {
  position: absolute;
  right: 0;
  width: 16px;
  height: 16px;
  border-left: 1px solid #ccc;
  display: flex;
  align-items: center;
  justify-content: center;
  pointer-events: none;
}
.tri::before { content: ""; border: 3px solid transparent; border-top: 4px solid #555; border-bottom: 0; }
.lock { margin: 0 5px 0 8px; }
.spin { width: 73px; display: flex; align-items: center; }
.spin input { flex: 1; padding-left: 3px; }
.steps { width: 11px; height: 16px; border-left: 1px solid #ccc; display: flex; flex-direction: column; justify-content: center; align-items: center; gap: 3px; }
.steps button { border: 3px solid transparent; }
.steps .inc { border-bottom: 4px solid #555; border-top: 0; }
.steps .dec { border-top: 4px solid #555; border-bottom: 0; }
.rot { margin: 0 7px 0 6px; }
.render { margin: 0 13px 0 5px; }
.crs { display: flex; align-items: center; gap: 1px; font-size: 8px; }
.crs svg { width: 12px; height: 12px; }
.msg { margin-left: 23px; height: 14px; }
.msg svg { display: block; width: 14px; height: 14px; }

.check { display: flex; align-items: center; gap: 5px; white-space: nowrap; }
.check input {
  appearance: none;
  box-sizing: border-box;
  flex: none;
  width: 12px;
  height: 12px;
  margin: 0;
  border: 1px solid #d0d0d0;
  background: #fff;
}
.render.check { gap: 4px; }
.status .check input { border: 1px solid #d0d0d0; background: #fff; }
.check input:checked::before {
  content: "";
  display: block;
  width: 8px;
  height: 8px;
  margin: 1px;
  background: #111;
  clip-path: polygon(0 50%, 18% 40%, 35% 68%, 78% 0, 100% 6%, 42% 100%, 28% 100%);
}

.popup {
  position: absolute;
  left: 1125px;
  top: 32px;
  width: 156px;
  height: 748px;
  box-sizing: border-box;
  display: flex;
  flex-direction: column;
  background: #fff;
  border: 1px solid #8c8c8c;
  box-shadow: 2px 1px 1px #c4c4c4;
}
.popup h3 { flex: 0 0 15px; line-height: 12px; text-align: center; font-weight: 700; }
.popup h3.second { flex-basis: 18px; line-height: 18px; font-weight: 400; }
.popup ul { display: flex; flex-direction: column; min-height: 0; }
.popup .list-a { flex: 18 1 0; }
.popup .list-b { flex: 20 1 0; }
.popup li { flex: 1; min-height: 0; display: flex; align-items: center; padding-left: 5px; }

.marks { position: absolute; left: 0; top: 0; pointer-events: none; }
.boxes { fill: none; stroke: #f01414; stroke-width: 3; filter: drop-shadow(2px 2px 2px rgba(0, 0, 0, 0.5)); }
.arrows { filter: drop-shadow(2px 2px 2px rgba(0, 0, 0, 0.5)); }
.line { fill: none; stroke: #7a0808; stroke-width: 2; }
.head { fill: #7a0808; }
</style>
